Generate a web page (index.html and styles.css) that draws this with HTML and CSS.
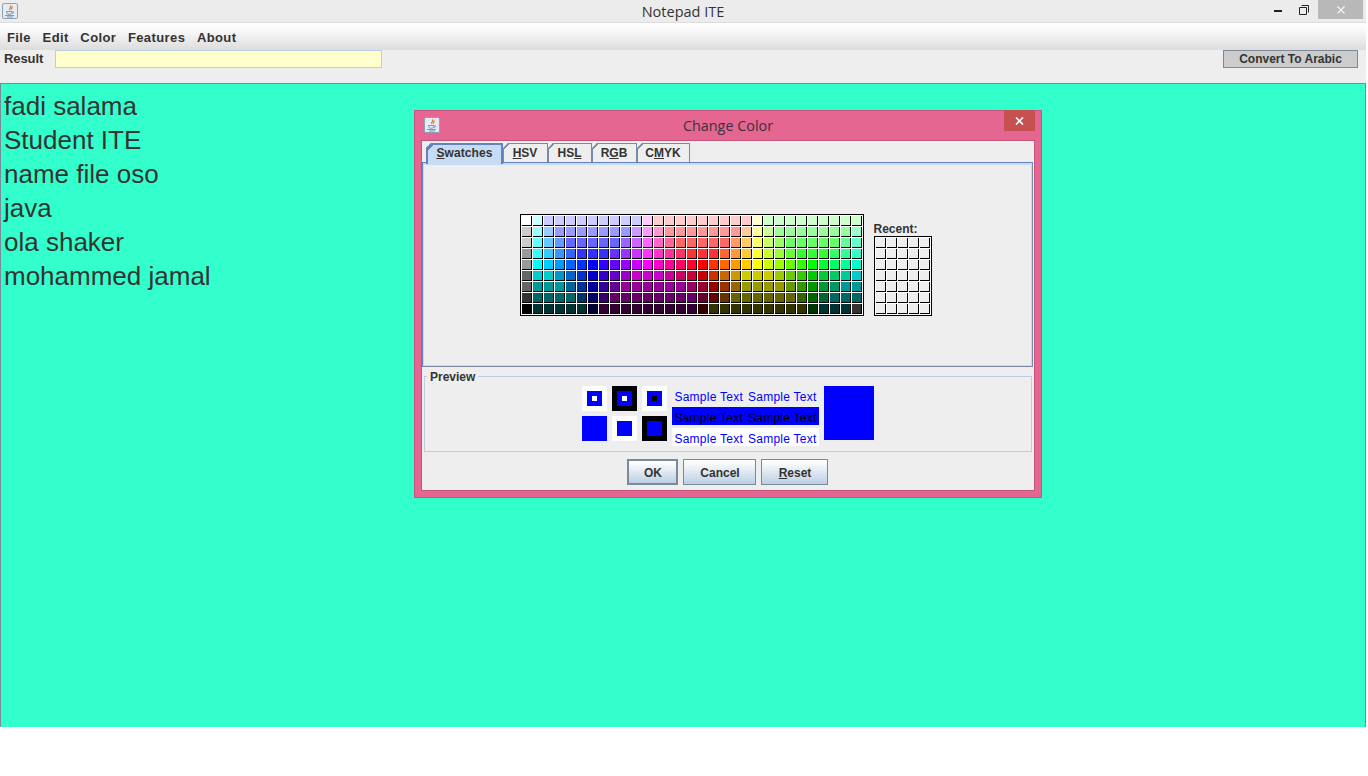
FILE: index.html
```html
<!DOCTYPE html>
<html lang="en">
<head>
<meta charset="UTF-8" />
<meta name="viewport" content="width=device-width, initial-scale=1" />
<title>Notepad ITE</title>
<link rel="stylesheet" href="styles.css">
</head>
<body>

<svg class="defs" width="0" height="0">
  <symbol id="javaIcon" viewBox="0 0 16 16">
    <rect x="0.5" y="0.5" width="15" height="15" rx="1.5" fill="#e4ebf2" stroke="#8fa2b5" />
    <path d="M8.5 2.500c1.500 1.500-2 2.500-.5 4.500M10 3.500c.8 1-1.200 1.600-.4 3" fill="none" stroke="#e2701c" stroke-width="1.200" />
    <path d="M4.500 8.500h5.500c0 2-1 2.800-2.800 2.800S4.500 10.500 4.500 8.500zM10.300 8.800c2-.5 2 1.500-.6 1.700" fill="none" stroke="#6a90b4" stroke-width="0.900" />
    <path d="M3 12.500h9M5 14h6" stroke="#6a90b4" stroke-width="0.900" />
  </symbol>
</svg>

<div class="app">
  <div class="titlebar">
    <svg class="app-icon"><use href="#javaIcon" /></svg>
    <div class="title-text">Notepad ITE</div>
    <div class="win-btns">
      <svg class="win-min" width="8" height="2"><rect width="8" height="2" fill="#222" /></svg>
      <svg class="win-max" width="10" height="10" viewBox="0 0 10 10">
        <path d="M2.500.5h7v7M.5 2.500h7v7h-7z" fill="none" stroke="#222" />
      </svg>
      <div class="win-close">
        <svg width="8" height="8" viewBox="0 0 8 8"><path d="M.5.5l7 7M7.500.5l-7 7" stroke="#f4f4f4" stroke-width="1.300" /></svg>
      </div>
    </div>
  </div>

  <div class="menubar">
    <span>File</span>
    <span>Edit</span>
    <span>Color</span>
    <span>Features</span>
    <span>About</span>
  </div>

  <div class="toolbar">
    <label class="result-label">Result</label>
    <div class="result-input"></div>
    <button class="convert-btn">Convert To Arabic</button>
  </div>

  <div class="editor">
    <div>fadi salama</div>
    <div>Student ITE</div>
    <div>name file oso</div>
    <div>java</div>
    <div>ola shaker</div>
    <div>mohammed jamal</div>
  </div>

  <div class="dialog">
    <div class="dialog-title">
      <svg class="dialog-icon"><use href="#javaIcon" /></svg>
      <div class="dialog-title-text">Change Color</div>
      <div class="dialog-close">
        <svg width="9" height="8" viewBox="0 0 9 8"><path d="M1 .5l7 7M8 .5l-7 7" stroke="#fff" stroke-width="1.600" /></svg>
      </div>
    </div>

    <div class="dialog-body">
      <div class="tabs">
        <div class="tab tab-active"><u>S</u>watches</div>
        <div class="tab tab-hsv"><u>H</u>SV</div>
        <div class="tab tab-hsl">HS<u>L</u></div>
        <div class="tab tab-rgb">R<u>G</u>B</div>
        <div class="tab tab-cmyk">C<u>M</u>YK</div>
      </div>

      <div class="tab-pane">
        <div class="swatches" id="swatches"></div>
        <div class="recent-wrap">
          <div class="recent-label">Recent:</div>
          <div class="recent" id="recent"></div>
        </div>
      </div>

      <fieldset class="preview">
        <legend>Preview</legend>
        <div class="preview-row">
          <div class="squares">
            <div class="sq sq-white"><div class="sq-in"><div class="sq-dot dot-white"></div></div></div>
            <div class="sq sq-black"><div class="sq-in"><div class="sq-dot dot-white"></div></div></div>
            <div class="sq sq-white"><div class="sq-in"><div class="sq-dot dot-black"></div></div></div>
            <div class="sq sq-blue"><div class="sq-in"></div></div>
            <div class="sq sq-white"><div class="sq-in"></div></div>
            <div class="sq sq-black"><div class="sq-in"></div></div>
          </div>
          <div class="samples">
            <div class="sample"><span>Sample Text</span><span>Sample Text</span></div>
            <div class="sample sample-blue"><span>Sample Text</span><span>Sample Text</span></div>
            <div class="sample sample-white"><span>Sample Text</span><span>Sample Text</span></div>
          </div>
          <div class="big-blue"></div>
        </div>
      </fieldset>

      <div class="dialog-btns">
        <button class="btn btn-ok">OK</button>
        <button class="btn btn-cancel">Cancel</button>
        <button class="btn btn-reset"><u>R</u>eset</button>
      </div>
    </div>
  </div>
</div>

<script src="script.js"></script>
</body>
</html>
```

FILE: styles.css
```css
body {
  margin: 0;
  background: #fff;
  font-family: "Liberation Sans", Arial, sans-serif;
  color: #333;
}
.defs {
  position: absolute;
}
.app {
  position: relative;
  width: 1366px;
  height: 727px;
  display: flex;
  flex-direction: column;
  overflow: hidden;
}

/* title bar */
.titlebar {
  height: 22px;
  flex: none;
  display: flex;
  align-items: flex-start;
  background: #ececec;
  border-bottom: 1px solid #dcdcdc;
  position: relative;
}
.app-icon {
  width: 16px;
  height: 16px;
  margin: 3px 0 0 2px;
}
.title-text {
  position: absolute;
  left: 0;
  right: 0;
  top: 3px;
  text-align: center;
  font-family: "Open Sans", sans-serif;
  font-size: 14.5px;
  line-height: 18px;
  color: #333;
}
.win-btns {
  margin-left: auto;
  display: flex;
  align-items: flex-start;
  margin-right: 3px;
}
.win-min {
  margin: 10px 0 0 0;
}
.win-max {
  margin: 5px 0 0 17px;
}
.win-close {
  width: 45px;
  height: 19px;
  margin-left: 9px;
  background: #b8b8b8;
  display: flex;
  align-items: center;
  justify-content: center;
}

/* menu */
.menubar {
  height: 27px;
  flex: none;
  display: flex;
  align-items: center;
  gap: 11.6px;
  padding-left: 7px;
  box-sizing: border-box;
  background: linear-gradient(to bottom, #fff, #fafafa 25%, #dcdcdc);
  font-size: 13px;
  font-weight: bold;
  letter-spacing: 0.4px;
  padding-top: 1px;
}

/* result row */
.toolbar {
  height: 33px;
  flex: none;
  box-sizing: border-box;
  display: flex;
  align-items: flex-start;
  background: #eeeeee;
}
.result-label {
  font-size: 13px;
  font-weight: bold;
  line-height: 17px;
  margin-left: 4px;
  width: 51px;
  letter-spacing: -0.1px;
}
.result-input {
  width: 327px;
  height: 18px;
  box-sizing: border-box;
  background: #ffffcc;
  border: 1px solid #b8cfe5;
}
.convert-btn {
  margin-left: auto;
  margin-right: 8px;
  width: 135px;
  height: 18px;
  padding: 0;
  box-sizing: border-box;
  background: #cccccc;
  border: 1px solid #7a8a99;
  font-family: "Liberation Sans", Arial, sans-serif;
  font-size: 12px;
  font-weight: bold;
  color: #333;
}

/* text area */
.editor {
  flex: 1;
  background: #33ffcc;
  border: 1px solid #7a8a99;
  border-bottom: none;
  padding: 5px 0 0 3px;
  font-size: 26px;
  line-height: 34px;
  color: #333;
}

/* color chooser */
.dialog {
  position: absolute;
  left: 414px;
  top: 110px;
  width: 628px;
  height: 388px;
  box-sizing: border-box;
  background: #e56691;
  border: 1px solid #c4557c;
  display: flex;
  flex-direction: column;
  padding: 0 6px 6px;
}
.dialog-title {
  height: 29px;
  flex: none;
  position: relative;
}
.dialog-icon {
  width: 16px;
  height: 16px;
  position: absolute;
  left: 3px;
  top: 6px;
}
.dialog-title-text {
  position: absolute;
  left: 0;
  right: 0;
  top: 6px;
  text-align: center;
  font-family: "Open Sans", sans-serif;
  font-size: 14.4px;
  line-height: 18px;
  color: #3c3040;
}
.dialog-close {
  position: absolute;
  right: 0;
  top: -1px;
  width: 31px;
  height: 21px;
  background: #c75050;
  display: flex;
  align-items: center;
  justify-content: center;
}
.dialog-body {
  flex: 1;
  background: #eeeeee;
  border: 1px solid #c4557c;
  display: flex;
  flex-direction: column;
}

.tabs {
  display: flex;
  height: 19px;
  margin: 2px 0 0 4px;
  flex: none;
  position: relative;
  z-index: 1;
}
.tab {
  position: relative;
  box-sizing: border-box;
  height: 19px;
  border: 1px solid #7a8aa5;
  border-left: none;
  border-bottom: none;
  font-size: 12px;
  font-weight: bold;
  line-height: 19px;
  text-align: center;
  color: #333;
  clip-path: polygon(5px 0, 100% 0, 100% 100%, 0 100%, 0 5px);
}
/* the cut corner of a tab */
.tab::before {
  content: "";
  position: absolute;
  left: 0;
  top: 4px;
  bottom: 0;
  width: 1px;
  background: #7a8aa5;
}
.tab::after {
  content: "";
  position: absolute;
  left: 0;
  top: -1px;
  width: 6px;
  height: 6px;
  background: linear-gradient(135deg, transparent 38%, #7a8aa5 38%, #7a8aa5 62%, transparent 62%);
}
.tab-active {
  width: 77px;
  height: 21px;
  background: #c6dcf4;
  border: 2px solid #6382bf;
  border-bottom: none;
  line-height: 17px;
  letter-spacing: 0.1px;
}
.tab-active::before {
  display: none;
}
.tab-active::after {
  left: -2px;
  top: -2px;
  width: 8px;
  height: 8px;
  background: linear-gradient(135deg, transparent 30%, #6382bf 30%, #6382bf 62%, transparent 62%);
}
.tab-hsv { width: 45px; }
.tab-hsl { width: 44px; }
.tab-rgb { width: 45px; }
.tab-cmyk { width: 53px; }

.tab-pane {
  height: 205px;
  flex: none;
  box-sizing: border-box;
  margin: 0 1px 0 0;
  border: 1px solid #7a8aa5;
  border-left-color: #6382bf;
  border-top-color: #6382bf;
  box-shadow: inset 0 2px 0 #c6dcf4, inset 1px 0 0 #c6dcf4, inset -1px 0 0 #c6dcf4, inset 0 -1px 0 #c6dcf4;
  display: flex;
  justify-content: center;
  align-items: flex-start;
  gap: 10px;
  padding: 51px 4px 0 0;
}
.swatches,
.recent {
  display: grid;
  gap: 1px;
  grid-auto-rows: 10px;
  padding: 1px;
  background: #fff;
  border: 1px solid #000;
}
.swatches {
  grid-template-columns: repeat(31, 10px);
}
.recent {
  grid-template-columns: repeat(5, 10px);
}
.swatch {
  box-sizing: border-box;
  border-right: 1px solid #000;
  border-bottom: 1px solid #000;
}
.recent .swatch {
  background: #eeeeee;
}
.recent-wrap {
  padding-top: 8px;
}
.recent-label {
  font-size: 12px;
  font-weight: bold;
  line-height: 14px;
  color: #333;
}

.preview {
  margin: 3px 2px 0 2px;
  padding: 3px 0 0;
  height: 82px;
  box-sizing: border-box;
  border: 1px solid #b8cfe5;
  flex: none;
}
.preview legend {
  margin-left: 2px;
  padding: 0 3px;
  font-size: 12px;
  font-weight: bold;
  line-height: 13px;
  color: #333;
  transform: translateY(1px);
}
.preview-row {
  display: flex;
  justify-content: center;
  align-items: flex-start;
  gap: 5px;
}
.squares {
  display: grid;
  grid-template-columns: repeat(3, 25px);
  grid-auto-rows: 25px;
  gap: 5px;
}
.sq {
  display: flex;
  align-items: center;
  justify-content: center;
}
.sq-white { background: #fff; }
.sq-black { background: #000; }
.sq-blue { background: #00f; }
.sq-in {
  width: 15px;
  height: 15px;
  background: #00f;
  display: flex;
  align-items: center;
  justify-content: center;
}
.sq-dot {
  width: 5px;
  height: 5px;
}
.dot-white { background: #fff; }
.dot-black { background: #000; }
.samples {
  display: flex;
  flex-direction: column;
  gap: 3px;
  width: 147px;
}
.sample {
  height: 18px;
  display: flex;
  justify-content: center;
  gap: 5px;
  font-size: 12px;
  line-height: 22px;
  color: #00f;
  letter-spacing: 0.25px;
}
.sample-blue {
  background: #00f;
  color: #000;
}
.sample-white {
  background: #fff;
}
.big-blue {
  width: 50px;
  height: 54px;
  background: #00f;
}

.dialog-btns {
  display: flex;
  justify-content: center;
  gap: 5px;
  margin: 7px 2px 0 0;
}
.btn {
  height: 26px;
  padding: 2px 0 0 2px;
  box-sizing: border-box;
  background: linear-gradient(to bottom, #fff, #f4f7fa 20%, #bccfe3);
  border: 1px solid #7a8a99;
  font-family: "Liberation Sans", Arial, sans-serif;
  font-size: 12px;
  font-weight: bold;
  color: #333;
}
.btn-ok {
  width: 51px;
  border-width: 2px;
}
.btn-cancel { width: 73px; }
.btn-reset { width: 67px; }
```

FILE: script.js
```js
// palette of the swatch grid, row by row
const rows = [
  ['fff', 'cff', ...rep('ccf', 9), 'fcf', ...rep('fcc', 9), 'ffc', ...rep('cfc', 9)],
  ['ccc', '9ff', '9cf', ...rep('99f', 7), 'c9f', 'f9f', 'f9c', ...rep('f99', 7), 'fc9', 'ff9', 'cf9', ...rep('9f9', 7), '9fc'],
  ['ccc', '6ff', '6cf', '69f', ...rep('66f', 5), '96f', 'c6f', 'f6f', 'f6c', 'f69', ...rep('f66', 5), 'f96', 'fc6', 'ff6', 'cf6', '9f6', ...rep('6f6', 5), '6f9', '6fc'],
  ['999', '3ff', '3cf', '39f', '36f', ...rep('33f', 3), '63f', '93f', 'c3f', 'f3f', 'f3c', 'f39', 'f36', ...rep('f33', 3), 'f63', 'f93', 'fc3', 'ff3', 'cf3', '9f3', '6f3', ...rep('3f3', 3), '3f6', '3f9', '3fc'],
  ['999', '0ff', '0cf', '09f', '06f', '03f', '00f', '30f', '60f', '90f', 'c0f', 'f0f', 'f0c', 'f09', 'f06', 'f03', 'f00', 'f30', 'f60', 'f90', 'fc0', 'ff0', 'cf0', '9f0', '6f0', '3f0', '0f0', '0f3', '0f6', '0f9', '0fc'],
  ['666', '0cc', '0cc', '09c', '06c', '03c', '00c', '30c', '60c', '90c', 'c0c', 'c0c', 'c0c', 'c09', 'c06', 'c03', 'c00', 'c30', 'c60', 'c90', 'cc0', 'cc0', 'cc0', '9c0', '6c0', '3c0', '0c0', '0c3', '0c6', '0c9', '0cc'],
  ['666', '099', '099', '099', '069', '039', '009', '309', '609', ...rep('909', 6), '906', '903', '900', '930', '960', ...rep('990', 4), '690', '390', '090', '093', '096', '099', '099'],
  ['333', ...rep('066', 4), '036', '006', '306', ...rep('606', 8), '603', '600', '630', ...rep('660', 6), '360', '060', '063', '066', '066', '066'],
  ['000', ...rep('033', 5), '003', ...rep('303', 9), '300', ...rep('330', 9), '030', '033', '033', '033', '333']
];

function rep(c, n) {
  return Array(n).fill(c);
}

const swatches = document.getElementById('swatches');
rows.forEach(row => {
  row.forEach(c => {
    const cell = document.createElement('div');
    cell.className = 'swatch';
    cell.style.background = '#' + c;
    swatches.appendChild(cell);
  });
});

const recent = document.getElementById('recent');
for (let i = 0; i < 35; i++) {
  const cell = document.createElement('div');
  cell.className = 'swatch';
  recent.appendChild(cell);
}
```
